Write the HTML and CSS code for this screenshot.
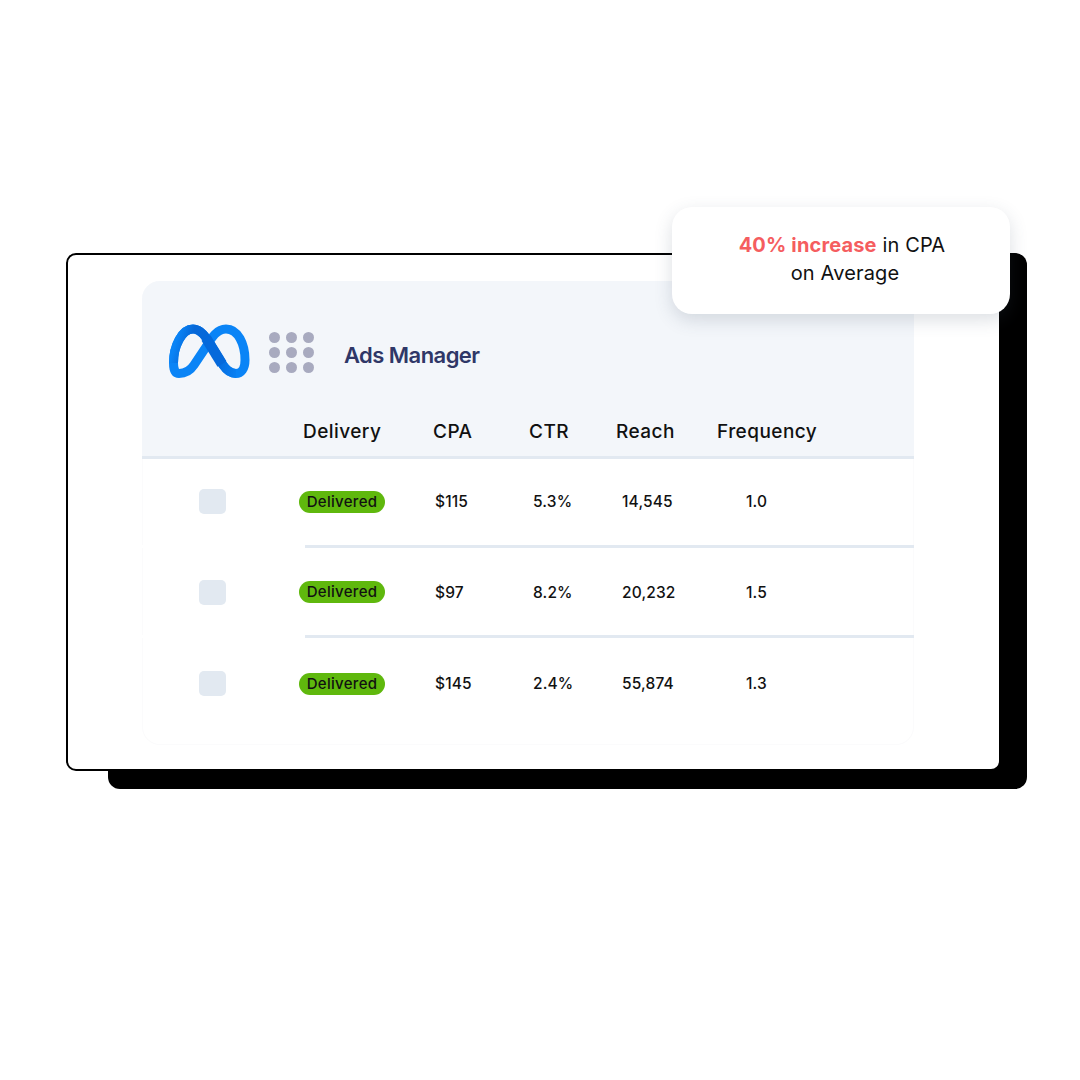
FILE: index.html
```html
<!DOCTYPE html>
<html lang="en">
<head>
	<meta charset="UTF-8">
	<title>Ads Manager</title>
	<link rel="stylesheet" href="styles.css">
</head>
<body>
	<main class="card">
		<section class="panel">
			<header class="top">
				<div class="brand">
					<svg class="meta" width="82" height="56" viewBox="0 0 82 56" fill="none">
						<defs>
							<linearGradient id="metaDark" x1="4" y1="30" x2="72" y2="50" gradientUnits="userSpaceOnUse">
								<stop offset="0" stop-color="#0a84f6"/>
								<stop offset="0.2" stop-color="#0668d8"/>
								<stop offset="0.62" stop-color="#0569db"/>
								<stop offset="1" stop-color="#0a84f6"/>
							</linearGradient>
						</defs>
						<path d="M11 49.500C7 49.500 5.500 45 5.500 39C5.500 22 14 5 25 5C33 5 38 13 44 23L55 41C59 47 63 49.500 68 49.500C73 49.500 77 45 77 36C77 20 70 5 58 5C49 5 44 13 38 23L26 41C22 47 17 49.500 11 49.500Z" stroke="#0a84f6" stroke-width="9"/>
						<path d="M5.500 39C5.500 22 14 5 25 5C33 5 38 13 44 23L55 41C59 47 63 49.500 68 49.500" stroke="url(#metaDark)" stroke-width="9"/>
						<path d="M38 14L54 40" stroke="#0569db" stroke-width="10.500"/>
					</svg>
					<div class="dots">
						<i></i><i></i><i></i>
						<i></i><i></i><i></i>
						<i></i><i></i><i></i>
					</div>
					<span class="title">Ads Manager</span>
				</div>
				<div class="heads">
					<span>Delivery</span>
					<span>CPA</span>
					<span>CTR</span>
					<span>Reach</span>
					<span>Frequency</span>
				</div>
			</header>
			<div class="row">
				<div class="check"></div>
				<div><span class="pill">Delivered</span></div>
				<div>$115</div>
				<div>5.3%</div>
				<div>14,545</div>
				<div>1.0</div>
			</div>
			<div class="row">
				<div class="check"></div>
				<div><span class="pill">Delivered</span></div>
				<div>$97</div>
				<div>8.2%</div>
				<div>20,232</div>
				<div>1.5</div>
			</div>
			<div class="row">
				<div class="check"></div>
				<div><span class="pill">Delivered</span></div>
				<div>$145</div>
				<div>2.4%</div>
				<div>55,874</div>
				<div>1.3</div>
			</div>
		</section>
		<aside class="note">
			<p><b>40% increase</b> in CPA<br><span class="sub">on Average</span></p>
		</aside>
	</main>
</body>
</html>
```

FILE: styles.css
```css
body {
	background-color: #fff;
	box-sizing: border-box;
	color: #111;
	font-family: Inter, "Liberation Sans", sans-serif;
	margin: 0;
	min-height: 1080px;
	padding: 253px 0 0 66px;
}

/* card */
.card {
	background-color: #fff;
	border: 2px solid #000;
	border-radius: 10px;
	box-sizing: border-box;
	height: 518px;
	padding: 26px 0 0 74px;
	position: relative;
	width: 935px;
}
.card::before {
	background-color: #000;
	border-radius: 12px;
	bottom: -20px;
	content: "";
	left: 40px;
	position: absolute;
	right: -28px;
	top: -2px;
	z-index: -1;
}

/* panel */
.panel {
	border-radius: 18px;
	box-shadow: inset 0 0 0 1px #fbfbfc;
	height: 464px;
	width: 772px;
}
.top {
	background-color: #f3f6fa;
	border-bottom: 3px solid #e2e9f1;
	border-radius: 18px 18px 0 0;
	box-sizing: border-box;
	height: 178px;
	padding: 43px 0 0 26px;
}
.brand {
	align-items: center;
	display: flex;
	height: 56px;
}
.meta {
	flex: none;
}
.dots {
	display: grid;
	gap: 4px 6px;
	grid-template-columns: repeat(3, 11px);
	margin-left: 19px;
}
.dots i {
	background-color: #a8aabf;
	border-radius: 50%;
	height: 11px;
	width: 11px;
}
.title {
	color: #2f3767;
	font-size: 22px;
	font-weight: 600;
	letter-spacing: -0.55px;
	margin-left: 30px;
	margin-top: 5px;
}
.heads {
	display: grid;
	font-size: 19px;
	font-weight: 500;
	grid-template-columns: 130px 96px 87px 101px auto;
	letter-spacing: 0.45px;
	margin-top: 40px;
	padding-left: 135px;
}

/* rows */
.row {
	align-items: center;
	display: grid;
	font-size: 15.5px;
	font-weight: 500;
	grid-template-columns: 100px 136px 98px 89px 124px auto;
	height: 85px;
	letter-spacing: 0.15px;
	padding-bottom: 1px;
	padding-left: 57px;
	position: relative;
}
.row + .row {
	border-top: 3px solid #e2e9f1;
	height: 86px;
	padding-bottom: 0;
	padding-top: 1px;
}
.row:last-child {
	height: 89px;
}
.row + .row::before {
	background-color: #fff;
	content: "";
	height: 3px;
	left: 0;
	position: absolute;
	top: -3px;
	width: 163px;
}
.check {
	background-color: #e2e9f1;
	border-radius: 5px;
	height: 25px;
	width: 27px;
}
.pill {
	background-color: #5fb80d;
	border-radius: 11px;
	display: inline-block;
	font-size: 15px;
	height: 22px;
	letter-spacing: 0.3px;
	line-height: 22px;
	text-align: center;
	width: 86px;
}

/* note */
.note {
	align-items: center;
	background-color: #fff;
	border-radius: 20px;
	box-shadow: 0 6px 18px rgba(60, 80, 100, 0.18);
	box-sizing: border-box;
	display: flex;
	font-size: 20px;
	height: 107px;
	justify-content: center;
	letter-spacing: 0.15px;
	line-height: 28px;
	padding: 0 0 4px 2px;
	position: absolute;
	right: -11px;
	text-align: center;
	top: -48px;
	width: 338px;
}
.note p {
	margin: 0;
}
.note b {
	color: #f55d5f;
	font-weight: 700;
}
.note .sub {
	padding-left: 6px;
}
```
